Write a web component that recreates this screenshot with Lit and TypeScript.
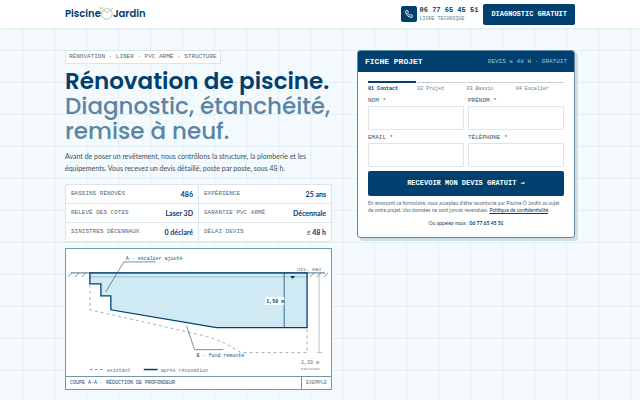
import { LitElement, html, css } from "lit";
import { customElement } from "lit/decorators.js";

const MONO = css`"Liberation Mono", "DejaVu Sans Mono", monospace`;

const FACTS = [
  ["Bassins rénovés", "486"],
  ["Expérience", "25 ans"],
  ["Relevé des cotes", "Laser 3D"],
  ["Garantie PVC armé", "Décennale"],
  ["Sinistres décennaux", "0 déclaré"],
  ["Délai devis", "≤ 48 h"],
];

const STEPS = ["01 Contact", "02 Projet", "03 Bassin", "04 Escalier"];

const FIELDS = [
  { id: "nom", label: "Nom", type: "text" },
  { id: "prenom", label: "Prénom", type: "text" },
  { id: "email", label: "Email", type: "email" },
  { id: "tel", label: "Téléphone", type: "tel" },
];

@customElement("site-header")
class SiteHeader extends LitElement {
  static styles = css`
    :host { display: block; background: #fff; box-shadow: 0 1px 2px #c9d9e266; position: relative; }
    .bar { display: flex; align-items: center; justify-content: space-between; height: 28px; padding: 0 65px; }
    .logo { display: flex; align-items: center; color: #00406f; font: 600 10px/14px Poppins, Lato, sans-serif; text-decoration: none; }
    .logo svg { width: 15px; height: 15px; margin: 0 -1px 2px -2px; }
    .right { display: flex; align-items: center; gap: 5px; }
    .phone { display: flex; align-items: center; gap: 3px; color: #00406f; text-decoration: none; }
    .tile { display: grid; place-items: center; width: 16px; height: 16px; border-radius: 2px; background: #00406f; }
    .tile svg { width: 8px; height: 8px; }
    .lines { display: flex; flex-direction: column; font-family: ${MONO}; }
    .num { font-size: 7px; line-height: 10px; font-weight: 700; }
    .sub { font-size: 5px; line-height: 8px; color: #667c8c; }
    button { height: 21px; padding: 0 8px; border: 0; border-radius: 2px; background: #00406f; color: #fff; font: 700 7px/9px ${MONO}; }
  `;
  render() {
    return html`<header class="bar">
      <a class="logo" href="#" aria-label="Piscine Ô Jardin"><span>Piscine</span>
        <svg viewBox="0 0 15 15" fill="none" stroke="#9db578" stroke-width="0.8">
          <path d="M5 3.600C2.400 5.200 2 9 3.600 11.200c1.800 2.400 5.800 2.700 8 .4 2.200-2.400 2-6.200-.4-8"/>
          <path d="M5 3.600c.6 2.200 2.800 3.500 4.800 2.400 1.300-.8 1.300-2.600.2-3.200-1.500-.7-3.600 0-5 .8z"/>
          <path d="M11.200 3.600c1.100.2 2-.5 2.400-1.700M.8 1.200l.8 1.700M3 1l.2 1.800"/>
        </svg><span>Jardin</span></a>
      <div class="right">
        <a class="phone" href="tel:0677654551">
          <span class="tile"><svg viewBox="0 0 24 24" fill="none" stroke="#fff" stroke-width="3" stroke-linejoin="round"><path d="M22 17v3a2 2 0 0 1-2.200 2A19.800 19.800 0 0 1 2 4.200 2 2 0 0 1 4 2h3a2 2 0 0 1 2 1.700c.1 1 .4 1.900.7 2.800a2 2 0 0 1-.5 2.100L8 9.900a16 16 0 0 0 6 6l1.300-1.300a2 2 0 0 1 2.100-.4c.9.300 1.800.6 2.800.7A2 2 0 0 1 22 17z"/></svg></span>
          <span class="lines"><span class="num">06 77 65 45 51</span><span class="sub">LIGNE TECHNIQUE</span></span>
        </a>
        <button type="button">DIAGNOSTIC GRATUIT</button>
      </div>
    </header>`;
  }
}

@customElement("fact-grid")
class FactGrid extends LitElement {
  static styles = css`
    dl { display: grid; grid-template-columns: 1fr 1fr; gap: 1px; margin: 0; padding: 1px; background: #d9e6ed; }
    div { display: flex; align-items: center; justify-content: space-between; height: 18px; padding: 0 5px; background: #fff; }
    dt { font: 6px/8px ${MONO}; color: #566a79; text-transform: uppercase; }
    dd { margin: 0; font: 700 7px/10px Lato, sans-serif; color: #00406f; }
  `;
  render() {
    return html`<dl>${FACTS.map(([k, v]) => html`<div><dt>${k}</dt><dd>${v}</dd></div>`)}</dl>`;
  }
}

@customElement("pool-section")
class PoolSection extends LitElement {
  static styles = css`
    figure { margin: 0; background: #fff; border: 1px solid #7396ae; }
    svg { display: block; width: 100%; }
    text { font-family: ${MONO}; font-size: 5px; fill: #60717e; }
    .dark { fill: #174b70; }
    .bold { font-weight: 700; fill: #00406f; }
    .small { font-size: 4px; }
    figcaption { display: flex; justify-content: space-between; border-top: 1px solid #7396ae; font: 5px/12px ${MONO}; color: #174b70; }
    .name { padding-left: 4px; }
    .tag { padding: 0 4px; border-left: 1px solid #7396ae; color: #60717e; }
  `;
  render() {
    return html`<figure>
      <svg viewBox="0 0 266 127" fill="none" role="img" aria-label="Coupe du bassin">
        <path d="M24 24H242V79H151L45 61V47H35V35H24Z" fill="#cfeaf2"/>
        <path d="M24 28H242" stroke="#7fb3c8" stroke-width="0.7"/>
        <path d="M24 36V61L68 71L134 86Q150 90 158 94L176 104H242V80" stroke="#8a9aa5" stroke-width="0.8" stroke-dasharray="3 3"/>
        <path d="M5 24H260" stroke="#174b70" stroke-width="0.8"/>
        <path d="M6 24l-4 4M13 24l-4 4M20 24l-4 4M249 24l-4 4M256 24l-4 4M263 24l-4 4" stroke="#60717e" stroke-width="0.8"/>
        <path d="M24 24H242V79H151L45 61V47H35V35H24Z" stroke="#00406f" stroke-width="1.300"/>
        <path d="M225 27h5l-2.500 3z" fill="#00406f"/>
        <path d="M219 24V79" stroke="#174b70" stroke-width="0.8"/>
        <path d="M254 24V104M252 104h5" stroke="#a5b1b9" stroke-width="0.8"/>
        <path d="M40 43L58 13H90M121 77L129 101H158" stroke="#3d5f78" stroke-width="0.7"/>
        <rect x="200" y="48" width="19" height="8" fill="#fff"/>
        <text class="bold" x="201" y="54">1,50 m</text>
        <text class="dark" x="60" y="11">A · escalier ajouté</text>
        <text class="dark" x="131" y="108">B · fond remonté</text>
        <text x="232" y="22">niv. eau</text>
        <text x="236" y="115">2,20 m</text>
        <text class="small" x="236" y="121">existant</text>
        <path d="M24 121h14" stroke="#8a9aa5" stroke-dasharray="3 2"/>
        <text x="41" y="123">existant</text>
        <path d="M78 121h14" stroke="#00406f" stroke-width="1.500"/>
        <text x="95" y="123">après rénovation</text>
      </svg>
      <figcaption><span class="name">COUPE A-A · RÉDUCTION DE PROFONDEUR</span><span class="tag">EXEMPLE</span></figcaption>
    </figure>`;
  }
}

@customElement("project-form")
class ProjectForm extends LitElement {
  static styles = css`
    form { border: 1px solid #5f89a5; border-radius: 3px; background: #fff; box-shadow: 3px 3px 0 #cddfe8; overflow: hidden; }
    .head { display: flex; align-items: center; justify-content: space-between; height: 21px; padding: 0 7px; background: #00406f; font-family: ${MONO}; }
    h2 { margin: 0; color: #fff; font-size: 8px; line-height: 10px; }
    .head span { color: #9ac8dd; font-size: 6px; line-height: 8px; }
    .body { display: flex; flex-direction: column; padding: 10px; }
    ol { display: grid; grid-template-columns: repeat(4, 1fr); gap: 1px; margin: 0; padding: 0; list-style: none; }
    li { border-top: 1px solid #c5cfd6; padding-top: 3px; font: 5px/6px ${MONO}; color: #667c8c; }
    .on { border-color: #00406f; box-shadow: 0 -1px #00406f; color: #00406f; font-weight: 700; }
    .fields { display: grid; grid-template-columns: 1fr 1fr; gap: 4px; margin-top: 5px; }
    .field { display: flex; flex-direction: column; gap: 2px; }
    label { font: 6px/7px ${MONO}; color: #3f5566; text-transform: uppercase; }
    input { box-sizing: border-box; width: 100%; height: 24px; padding: 0 6px; border: 1px solid #dbe6ec; border-radius: 1px; background: #fff; font: 7px Lato, sans-serif; }
    button { height: 25px; margin-top: 4px; border: 0; border-radius: 2px; background: #00406f; color: #fff; font: 700 7px/9px ${MONO}; }
    .arrow { font-family: "DejaVu Sans Mono", monospace; }
    p { margin: 4px 0 0; font: 5px/7px Lato, sans-serif; color: #566a79; }
    .call { margin-top: 6px; text-align: center; color: #33424e; }
    a { color: #00406f; }
    .call a { text-decoration: none; font-weight: 700; }
  `;
  render() {
    return html`<form>
      <div class="head"><h2>FICHE PROJET</h2><span>DEVIS ≤ 48 H · GRATUIT</span></div>
      <div class="body">
        <ol>${STEPS.map((s, i) => html`<li class=${i ? "" : "on"}>${s}</li>`)}</ol>
        <div class="fields">${FIELDS.map((f) => html`<div class="field"><label for=${f.id}>${f.label} *</label><input id=${f.id} type=${f.type}></div>`)}</div>
        <button type="button">RECEVOIR MON DEVIS GRATUIT <span class="arrow">→</span></button>
        <p>En envoyant ce formulaire, vous acceptez d'être recontacté par Piscine Ô Jardin au sujet de votre projet. Vos données ne sont jamais revendues. <a href="#">Politique de confidentialité</a>.</p>
        <p class="call">Ou appelez-nous : <a href="tel:0677654551">06 77 65 45 51</a></p>
      </div>
    </form>`;
  }
}

@customElement("app-root")
class AppRoot extends LitElement {
  static styles = css`
    :host {
      display: flow-root; min-height: 100vh; background-color: #f4fafd;
      background-image:
        linear-gradient(90deg, #e4eef3 1px, transparent 1px), linear-gradient(#e4eef3 1px, transparent 1px),
        linear-gradient(90deg, #f0f7fa 1px, transparent 1px), linear-gradient(#f0f7fa 1px, transparent 1px);
      background-size: 32px 32px, 32px 32px, 8px 8px, 8px 8px;
      background-position: 22px 18px;
    }
    main { display: grid; grid-template-columns: minmax(0, 267fr) minmax(0, 218fr); gap: 25px; align-items: start; padding: 22px 65px 10px; }
    .left { display: flex; flex-direction: column; align-items: stretch; }
    .kicker { align-self: flex-start; padding: 0 3px; border: 1px solid #d9e5ec; background: #fff; font: 6px/12px ${MONO}; color: #566a79; }
    h1 { margin: 5px 0 0; font: 500 23px/25px Poppins, Inter, sans-serif; color: #00406f; white-space: nowrap; }
    h1 .strong { font-weight: 600; }
    h1 .soft { color: #5b85a2; }
    h1 span { display: block; }
    .lead { margin: 6px 0 10px; font: 7px/12px Lato, sans-serif; color: #3f4f5b; }
    pool-section { margin-top: 6px; }
  `;
  render() {
    return html`<site-header></site-header>
      <main>
        <section class="left">
          <div class="kicker">RÉNOVATION · LINER · PVC ARMÉ · STRUCTURE</div>
          <h1><span class="strong">Rénovation de piscine.</span><span class="soft">Diagnostic, étanchéité,</span><span class="soft">remise à neuf.</span></h1>
          <p class="lead">Avant de poser un revêtement, nous contrôlons la structure, la plomberie et les équipements. Vous recevez un devis détaillé, poste par poste, sous 48 h.</p>
          <fact-grid></fact-grid>
          <pool-section></pool-section>
        </section>
        <project-form></project-form>
      </main>`;
  }
}
